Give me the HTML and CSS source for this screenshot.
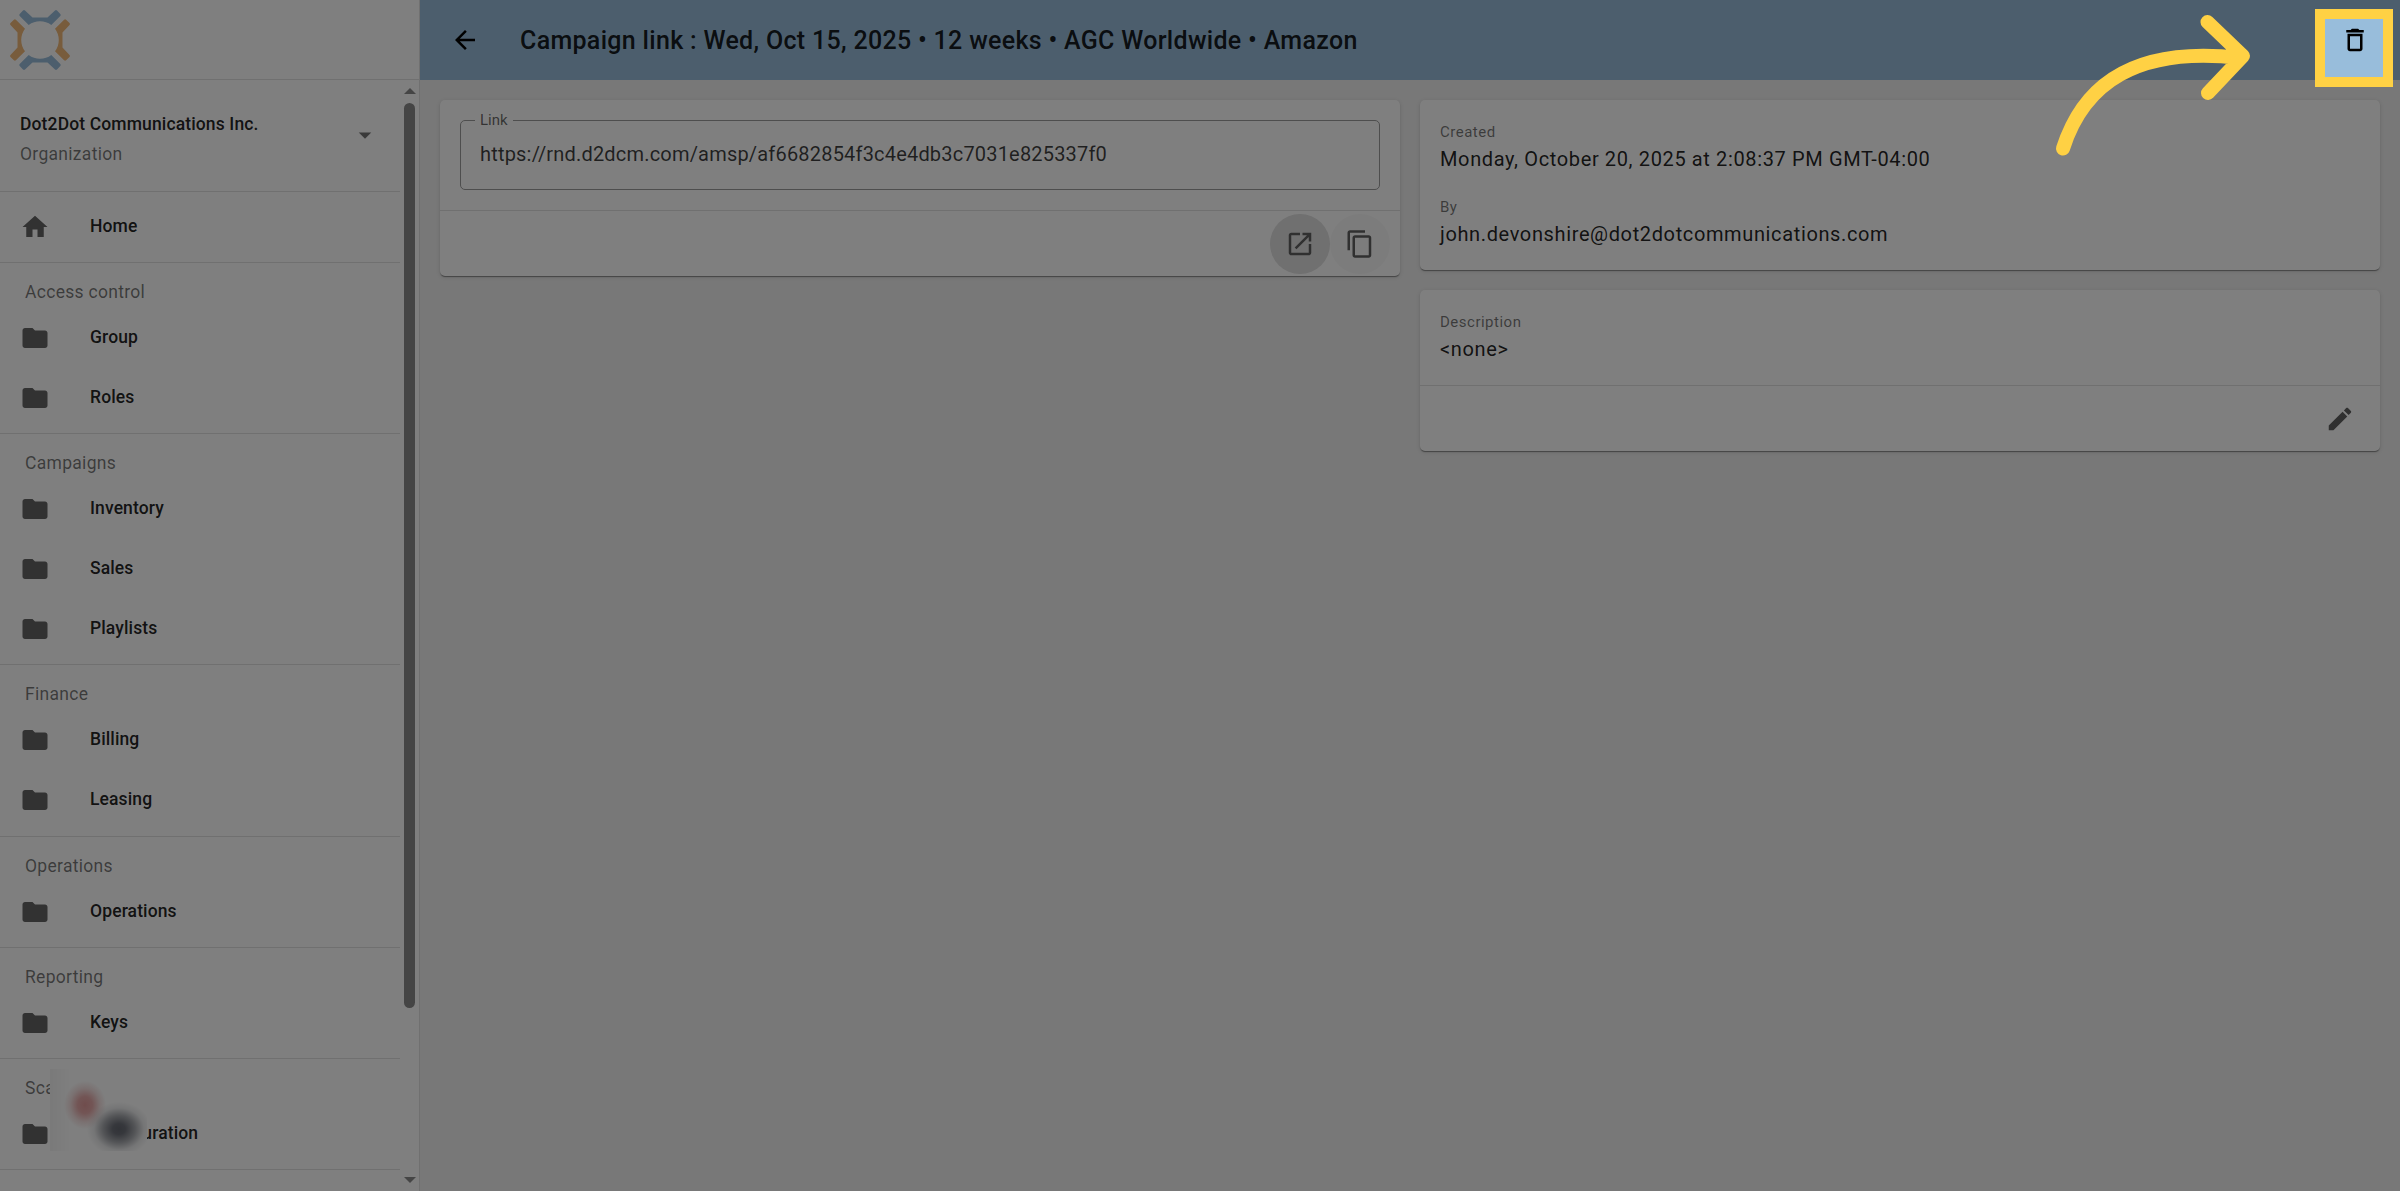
FILE: index.html
```
<!DOCTYPE html>
<html lang="en">
<head>
    <meta charset="UTF-8">
    <meta name="viewport" content="width=device-width, initial-scale=1.0">
    <title>Campaign link</title>
    <link rel="stylesheet" href="styles.css">
</head>
<body>

    <!-- shared icons -->
    <svg class="icon-defs">
        <symbol id="folder" viewBox="0 0 24 24"><path d="M10 4H4c-1.1 0-2 .9-2 2v12c0 1.1.9 2 2 2h16c1.1 0 2-.9 2-2V8c0-1.1-.9-2-2-2h-8l-2-2z"/></symbol>
        <symbol id="bar" viewBox="0 0 60 60"><path d="M13 .5Q14 -.3 15 .5L22.500 7.500H37.500L45 .5Q46 -.3 47 .5L50.300 3.900Q51.100 4.900 50.300 5.900L41.300 15A18.800 18.800 0 0 0 18.700 15L9.700 5.900Q8.900 4.900 9.700 3.900Z"/></symbol>
    </svg>

    <aside class="sidebar">
        <div class="logo">
            <svg width="60" height="60" viewBox="0 0 60 60">
                <use class="blue" href="#bar" width="60" height="60"/>
                <use class="orange" href="#bar" width="60" height="60" transform="rotate(90 30 30)"/>
                <use class="blue" href="#bar" width="60" height="60" transform="rotate(180 30 30)"/>
                <use class="orange" href="#bar" width="60" height="60" transform="rotate(270 30 30)"/>
            </svg>
        </div>
        <div class="sidebar-body">
            <nav class="nav">
                <div class="org">
                    <div class="org-text">
                        <div class="org-name">Dot2Dot Communications Inc.</div>
                        <div class="org-type">Organization</div>
                    </div>
                    <svg class="icon" viewBox="0 0 24 24"><path d="M7 10l5 5 5-5z"/></svg>
                </div>
                <div class="group home">
                    <a class="item"><svg class="icon" viewBox="0 0 24 24"><path d="M10 20v-6h4v6h5v-8h3L12 3 2 12h3v8z"/></svg>Home</a>
                </div>
                <div class="group">
                    <h3>Access control</h3>
                    <a class="item"><svg class="icon"><use href="#folder"/></svg>Group</a>
                    <a class="item"><svg class="icon"><use href="#folder"/></svg>Roles</a>
                </div>
                <div class="group">
                    <h3>Campaigns</h3>
                    <a class="item"><svg class="icon"><use href="#folder"/></svg>Inventory</a>
                    <a class="item"><svg class="icon"><use href="#folder"/></svg>Sales</a>
                    <a class="item"><svg class="icon"><use href="#folder"/></svg>Playlists</a>
                </div>
                <div class="group">
                    <h3>Finance</h3>
                    <a class="item"><svg class="icon"><use href="#folder"/></svg>Billing</a>
                    <a class="item"><svg class="icon"><use href="#folder"/></svg>Leasing</a>
                </div>
                <div class="group">
                    <h3>Operations</h3>
                    <a class="item"><svg class="icon"><use href="#folder"/></svg>Operations</a>
                </div>
                <div class="group">
                    <h3>Reporting</h3>
                    <a class="item"><svg class="icon"><use href="#folder"/></svg>Keys</a>
                </div>
                <div class="group">
                    <h3>Scala</h3>
                    <a class="item"><svg class="icon"><use href="#folder"/></svg>Configuration</a>
                </div>
            </nav>
            <div class="scrollbar">
                <span class="arrow-up"></span>
                <span class="thumb"></span>
                <span class="arrow-down"></span>
            </div>
        </div>
    </aside>

    <div class="page">
        <header class="toolbar">
            <svg class="icon" viewBox="0 0 24 24"><path d="M20 11H7.830l5.590-5.590L12 4l-8 8 8 8 1.410-1.410L7.830 13H20v-2z"/></svg>
            <h1>Campaign link : Wed, Oct 15, 2025 • 12 weeks • AGC Worldwide • Amazon</h1>
            <svg class="icon" viewBox="0 0 24 24"><path d="M6 19c0 1.100.9 2 2 2h8c1.100 0 2-.9 2-2V7H6v12zM8 9h8v10H8V9zm7.500-5l-1-1h-5l-1 1H5v2h14V4z"/></svg>
        </header>

        <main class="content">
            <div class="column">
                <section class="card">
                    <fieldset class="field">
                        <legend>Link</legend>
                        <div class="link">https://rnd.d2dcm.com/amsp/af6682854f3c4e4db3c7031e825337f0</div>
                    </fieldset>
                    <div class="actions">
                        <button class="round focused"><svg class="icon" viewBox="0 0 24 24"><path d="M19 19H5V5h7V3H5c-1.110 0-2 .9-2 2v14c0 1.100.89 2 2 2h14c1.100 0 2-.9 2-2v-7h-2v7zM14 3v2h3.590l-9.830 9.830 1.410 1.410L19 6.410V10h2V3h-7z"/></svg></button>
                        <button class="round hovered"><svg class="icon" viewBox="0 0 24 24"><path d="M16 1H4c-1.100 0-2 .9-2 2v14h2V3h12V1zm3 4H8c-1.100 0-2 .9-2 2v14c0 1.100.9 2 2 2h11c1.100 0 2-.9 2-2V7c0-1.100-.9-2-2-2zm0 16H8V7h11v14z"/></svg></button>
                    </div>
                </section>
            </div>
            <div class="column">
                <section class="card">
                    <dl class="details">
                        <dt>Created</dt>
                        <dd>Monday, October 20, 2025 at 2:08:37 PM GMT-04:00</dd>
                        <dt>By</dt>
                        <dd>john.devonshire@dot2dotcommunications.com</dd>
                    </dl>
                </section>
                <section class="card">
                    <dl class="details description">
                        <dt>Description</dt>
                        <dd>&lt;none&gt;</dd>
                    </dl>
                    <div class="actions">
                        <button class="round"><svg class="icon" viewBox="0 0 24 24"><path d="M3 17.250V21h3.750L17.810 9.940l-3.750-3.750L3 17.250zM20.710 7.040c.39-.39.39-1.020 0-1.410l-2.340-2.340c-.39-.39-1.020-.39-1.410 0l-1.830 1.830 3.750 3.750 1.830-1.830z"/></svg></button>
                    </div>
                </section>
            </div>
        </main>
    </div>

    <!-- guide overlay -->
    <div class="blurred"></div>
    <div class="spotlight"></div>
    <svg class="pointer" width="220" height="160" viewBox="0 0 220 160">
        <path d="M23 148.500C44 83 97 46 200 58M167.500 22L203 56L168 93"/>
    </svg>

</body>
</html>
```
FILE: styles.css
```
* {
    box-sizing: border-box;
}

body {
    margin: 0;
    height: 1191px;
    display: flex;
    position: relative;
    overflow: hidden;
    font-family: Roboto, sans-serif;
    color: rgba(0, 0, 0, 0.87);
    background-color: #f0f0f0;
}

h1, h3, dl, dd {
    margin: 0;
}

.icon-defs {
    position: absolute;
    width: 0;
    height: 0;
}

.icon {
    display: block;
    width: 30px;
    height: 30px;
    flex: none;
    fill: currentColor;
}

/* Sidebar */
.sidebar {
    width: 420px;
    flex: none;
    display: flex;
    flex-direction: column;
    background-color: white;
    border-right: 1px solid #e0e0e0;
}

.logo {
    height: 80px;
    flex: none;
    padding: 10px;
    border-bottom: 1px solid #e0e0e0;
}

.blue {
    fill: #98bddb;
}

.orange {
    fill: #f0b878;
}

.sidebar-body {
    flex: 1;
    min-height: 0;
    display: flex;
}

.nav {
    width: 400px;
    overflow: hidden;
}

.org {
    height: 111.5px;
    display: flex;
    align-items: center;
    justify-content: space-between;
    padding: 0 20px;
    border-bottom: 1px solid #e0e0e0;
}

.org .icon {
    color: #757575;
}

.org-text {
    padding-top: 8px;
}

.org-name {
    font-size: 17.5px;
    font-weight: 500;
    line-height: 30px;
    letter-spacing: 0.13px;
}

.org-type {
    font-size: 17.5px;
    line-height: 30px;
    letter-spacing: 0.3px;
    color: rgba(0, 0, 0, 0.54);
}

.group {
    padding-bottom: 5.25px;
    border-bottom: 1px solid #e0e0e0;
}

.home {
    padding-top: 5px;
}

.group h3 {
    height: 45px;
    padding: 14px 25px 0;
    font-size: 17.5px;
    font-weight: 400;
    line-height: 30px;
    letter-spacing: 0.3px;
    color: rgba(0, 0, 0, 0.54);
}

.item {
    height: 60px;
    display: flex;
    align-items: center;
    gap: 40px;
    padding: 0 20px 2px;
    font-size: 17.5px;
    font-weight: 500;
    letter-spacing: 0.12px;
}

.item .icon {
    margin-top: 2px;
    color: #646464;
}

.scrollbar {
    width: 19px;
    display: flex;
    flex-direction: column;
    align-items: center;
    padding: 8px 0;
}

.arrow-up, .arrow-down {
    border: 6px solid transparent;
}

.arrow-up {
    border-top: 0;
    border-bottom-color: #8a8a8a;
}

.arrow-down {
    margin-top: auto;
    border-bottom: 0;
    border-top-color: #8a8a8a;
}

.thumb {
    width: 11px;
    height: 905px;
    margin-top: 9px;
    border-radius: 6px;
    background-color: #8a8a8a;
}

/* Page */
.page {
    flex: 1;
}

.toolbar {
    height: 80px;
    display: flex;
    align-items: center;
    padding: 0 30px;
    color: black;
    background-color: #98bddb;
}

.toolbar h1 {
    flex: 1;
    margin-left: 40px;
    font-size: 25px;
    font-weight: 500;
    letter-spacing: 0.31px;
    color: rgba(0, 0, 0, 0.87);
}

.content {
    display: flex;
    gap: 20px;
    padding: 20px;
}

.column {
    flex: 1;
    display: flex;
    flex-direction: column;
    gap: 20px;
}

.card {
    border-radius: 5px;
    background-color: white;
    box-shadow: 0 2px 1px -1px rgba(0, 0, 0, 0.25), 0 1px 1px rgba(0, 0, 0, 0.18), 0 1px 4px rgba(0, 0, 0, 0.12);
}

.field {
    height: 78px;
    margin: 12px 20px 20px;
    padding: 0 19px;
    border: 1px solid #9c9c9c;
    border-radius: 5px;
}

.field legend {
    height: 17px;
    margin-left: -5px;
    padding: 0 5px;
    font-size: 15px;
    line-height: 17px;
    color: rgba(0, 0, 0, 0.6);
}

.link {
    padding-top: 13px;
    font-size: 20px;
    line-height: 24px;
    letter-spacing: 0.19px;
    color: rgba(0, 0, 0, 0.75);
}

.actions {
    height: 66px;
    display: flex;
    justify-content: flex-end;
    padding: 3px 10px;
    border-top: 1px solid #e0e0e0;
}

.round {
    width: 60px;
    height: 60px;
    padding: 15px;
    border: none;
    border-radius: 50%;
    color: #606060;
    background-color: transparent;
}

.focused {
    background-color: #e0e0e0;
}

.hovered {
    background-color: #f9f9f9;
}

.details {
    height: 170px;
    padding: 20px;
}

.description {
    height: 95px;
}

.details dt {
    height: 24px;
    font-size: 15px;
    line-height: 25px;
    letter-spacing: 0.5px;
    color: rgba(0, 0, 0, 0.54);
}

.details dd {
    margin-bottom: 21px;
    font-size: 20px;
    line-height: 30px;
    letter-spacing: 0.63px;
}

/* Guide overlay */
.blurred {
    position: absolute;
    left: 50px;
    top: 1069px;
    width: 97px;
    height: 82px;
    background: radial-gradient(ellipse 32px 27px at 69px 60px, #646770 0%, #6d7079 20%, rgba(130, 133, 140, 0.7) 50%, rgba(190, 192, 196, 0.3) 78%, transparent 100%),
        radial-gradient(ellipse 21px 24px at 35px 36px, #e09a9a 0%, rgba(225, 155, 155, 0.85) 35%, rgba(230, 180, 180, 0.4) 70%, transparent 100%),
        linear-gradient(to right, #f4f4f4, #fefefe 20px);
}

.spotlight {
    position: absolute;
    left: 2315px;
    top: 9px;
    width: 78px;
    height: 78px;
    border: 10px solid #ffd144;
    box-shadow: 0 0 0 2400px rgba(0, 0, 0, 0.5);
}

.pointer {
    position: absolute;
    left: 2040px;
    top: 0;
}

.pointer path {
    fill: none;
    stroke: #ffd144;
    stroke-width: 14;
    stroke-linecap: round;
    stroke-linejoin: round;
}
```
